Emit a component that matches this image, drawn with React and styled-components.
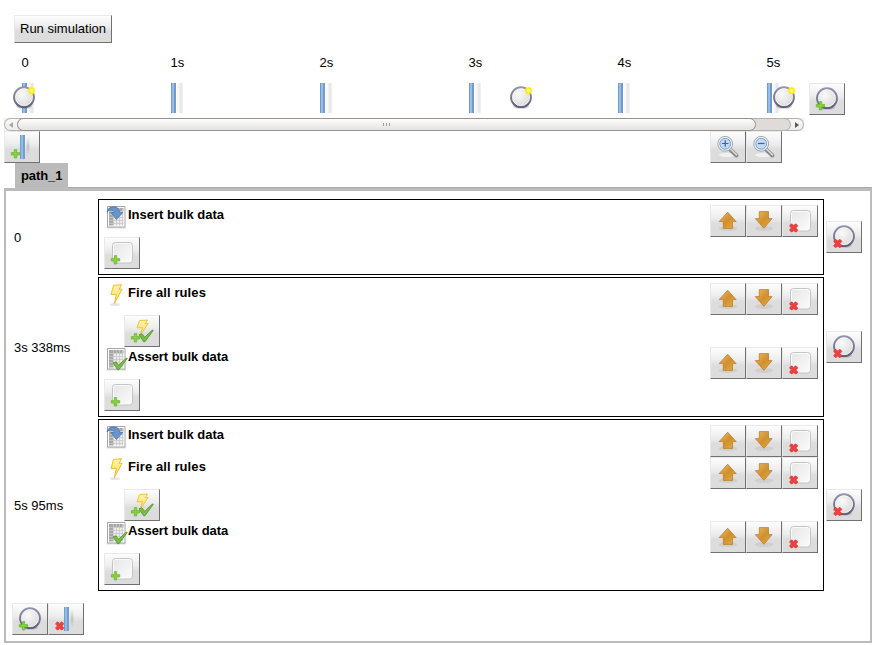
import React from "react";
import styled, { createGlobalStyle } from "styled-components";

const GlobalStyle = createGlobalStyle`
  body {
    margin: 0;
    background: #fff;
    color: #000;
    font: 13px/15px "Liberation Sans", Arial, sans-serif;
  }
  svg { display: block; flex: none; }
`;

const Page = styled.main`
  box-sizing: border-box;
  width: 874px;
  height: 645px;
  padding: 15px 2px 2px 4px;
  display: flex;
  flex-direction: column;
`;

const Button = styled.button`
  box-sizing: border-box;
  flex: none;
  display: flex;
  align-items: center;
  justify-content: center;
  width: ${(p) => p.$width || 36}px;
  height: ${(p) => p.$height || 32}px;
  margin: 0;
  padding: ${(p) => (p.$label ? "0 0 1px" : "0")};
  border: 1px solid #e9e9e9;
  border-right-color: #707070;
  border-bottom-color: #707070;
  background: linear-gradient(#fdfdfd 0%, #ededed 40%, #dddddd 58%, #dcdcdc 100%);
  font: inherit;
  color: inherit;
`;

const RunBar = styled.div`
  height: 28px;
  padding-left: 10px;
  margin-bottom: 12px;
`;

const TimelineRow = styled.div`
  display: flex;
  height: 63px;
`;

const Timeline = styled.div`
  position: relative;
  display: flex;
  width: 800px;
  height: 58px;
  margin-right: 5px;
  padding-left: 18px;
  box-sizing: border-box;
  overflow: hidden;
`;

const Tick = styled.div`
  flex: 0 0 149px;
  & > span {
    display: block;
    height: 28px;
    margin-left: -0.5px;
  }
`;

const Marker = styled.div`
  position: absolute;
  top: 31px;
  left: ${(p) => p.$left}px;
`;

const AddStepSlot = styled.div`
  padding-top: 28px;
`;

const ScrollBar = styled.div`
  box-sizing: border-box;
  display: flex;
  width: 800px;
  height: 13px;
  background: #f0efed;
`;

const ScrollArrow = styled.div`
  box-sizing: border-box;
  display: flex;
  align-items: center;
  justify-content: ${(p) => (p.$end ? "flex-end" : "center")};
  width: ${(p) => (p.$end ? 20 : 20)}px;
  height: 13px;
  margin-left: ${(p) => (p.$end ? -7 : 0)}px;
  margin-right: ${(p) => (p.$end ? 0 : -7)}px;
  padding-right: ${(p) => (p.$end ? 4 : 7)}px;
  border: 1px solid #b4b0ab;
  border-width: ${(p) => (p.$end ? "1px 1px 1px 0" : "1px 0 1px 1px")};
  border-radius: ${(p) => (p.$end ? "0 7px 7px 0" : "7px 0 0 7px")};
  background: linear-gradient(#f9f8f7, #eeedeb);
`;

const ScrollTrack = styled.div`
  box-sizing: border-box;
  position: relative;
  z-index: 1;
  width: 774px;
  height: 13px;
  border: 1px solid #b4b0ab;
  border-left: 0;
  border-radius: 7px;
  background: #dedbd8;
`;

const ScrollThumb = styled.div`
  box-sizing: border-box;
  display: flex;
  align-items: center;
  justify-content: center;
  gap: 2px;
  width: 739px;
  height: 13px;
  margin-top: -1px;
  border: 1px solid #96918c;
  border-radius: 7px;
  background: linear-gradient(#fdfdfc, #f0efed 50%, #e5e3e0);
  & > i {
    width: 1px;
    height: 3px;
    background: #a09c98;
  }
`;

const TimelineTools = styled.div`
  display: flex;
  height: 32px;
  & > :first-child { margin-right: 670px; }
`;

const TabBar = styled.div`
  display: flex;
  width: 868px;
  height: 25px;
  padding-left: 11px;
  box-sizing: border-box;
`;

const Tab = styled.div`
  box-sizing: border-box;
  width: 53px;
  padding: 5px 0 0 6px;
  background: #bbb;
  font-weight: bold;
  letter-spacing: -0.1px;
`;

const TabRule = styled.div`
  flex: 1;
  border-bottom: 1px solid #aaaaa4;
`;

const Panel = styled.section`
  box-sizing: border-box;
  width: 868px;
  height: 455px;
  padding: 8px 8px 7px 6px;
  border: 2px solid #bbb;
  border-top-width: 3px;
  display: flex;
  flex-direction: column;
  gap: 2px;
`;

const StepRow = styled.div`
  display: grid;
  grid-template-columns: 86px 726px 36px;
  align-items: center;
  & > :last-child { margin-left: 2px; }
`;

const Time = styled.span`
  padding-left: 2px;
`;

const Operations = styled.div`
  box-sizing: border-box;
  padding: 5px;
  border: 1px solid #000;
`;

const Operation = styled.div`
  display: flex;
  height: 32px;
`;

const OperationName = styled.strong`
  flex: 1;
  padding-top: 2px;
  letter-spacing: ${(p) => p.$tracking}px;
`;

const Toolbar = styled.div`
  display: flex;
  padding-left: ${(p) => (p.$indent ? 20 : 0)}px;
`;

const Footer = styled.footer`
  display: flex;
  margin-top: 10px;
`;

const Plus = ({ x = 1, y = 14.2 }) => (
  <path
    transform={`translate(${x} ${y})`}
    d="M3.3 .4h2.4v3h3v2.400h-3v3H3.3v-3h-3V3.400h3z"
    fill="#86d13c"
    stroke="#66b52b"
    strokeWidth=".7"
  />
);

const Cross = ({ x = 1.2, y = 14.4 }) => (
  <path
    transform={`translate(${x} ${y})`}
    d="M.5 2 2 .5h1L4.500 2 6 .5h1L8.500 2v.8L6.800 4.500l1.700 1.700V7L7 8.500H6L4.500 7 3 8.500H2L.5 7v-.8l1.700-1.700L.5 2.800z"
    fill="#ed4040"
    stroke="#d92c30"
    strokeWidth=".5"
  />
);

function StepIcon({ badge }) {
  return (
    <svg width="24" height="24" viewBox="0 0 24 24">
      <defs>
        <radialGradient id="orb" cx=".4" cy=".35" r=".7">
          <stop offset="0" stopColor="#fafafa" />
          <stop offset="1" stopColor="#d8d8d6" />
        </radialGradient>
        <linearGradient id="ring" x2="0" y2="1">
          <stop offset="0" stopColor="#9493ae" />
          <stop offset="1" stopColor="#625d7c" />
        </linearGradient>
      </defs>
      <ellipse cx="12" cy="20.5" rx="8" ry="2.3" fill="#777" opacity=".28" />
      <circle cx="12" cy="11.2" r="9.9" fill="url(#orb)" stroke="url(#ring)" strokeWidth="2" />
      <circle cx="12" cy="11.2" r="8.5" fill="none" stroke="#fff" strokeWidth=".8" opacity=".8" />
      {badge === "add" && <Plus />}
      {badge === "remove" && <Cross y={14} />}
      {badge === "dot" && (
        <>
          <circle cx="19.5" cy="4.6" r="4.1" fill="#fff43c" opacity=".35" />
          <circle cx="19.5" cy="4.6" r="2.5" fill="#fff9a0" stroke="#ffec17" strokeWidth="1.7" />
        </>
      )}
    </svg>
  );
}

function BarIcon({ badge }) {
  return (
    <svg width="24" height="24" viewBox="0 0 24 24">
      <defs>
        <radialGradient id="barShadow">
          <stop offset="0" stopColor="#aaa" stopOpacity=".75" />
          <stop offset="1" stopColor="#ccc" stopOpacity="0" />
        </radialGradient>
      </defs>
      <ellipse cx="18" cy="12" rx="2.5" ry="11" fill="url(#barShadow)" />
      <path d="M10 0h5v24h-5z" fill="#709fd3" />
      <path d="M11 0h2v24h-2z" fill="#96b9e0" />
      {badge === "add" ? <Plus /> : <Cross />}
    </svg>
  );
}

const TickBar = () => (
  <svg width="12" height="30" viewBox="0 0 12 30">
    <path d="M0 0h5v30H0z" fill="#6f9bd0" />
    <path d="M1 0h2v30H1z" fill="#9abce2" />
    <path d="M6 0h2v30H6z" fill="#f8f8f8" />
    <path d="M8 0h4v30H8z" fill="#f0f0f0" />
    <path d="M9 0h2v30H9z" fill="#e8e8e8" />
  </svg>
);

function BoxIcon({ badge }) {
  return (
    <svg width="24" height="24" viewBox="0 0 24 24">
      <defs>
        <linearGradient id="boxFill" x2="1" y2="1">
          <stop offset="0" stopColor="#e7e7e7" />
          <stop offset="1" stopColor="#fafafa" />
        </linearGradient>
      </defs>
      <rect x="2.5" y="1.5" width="20" height="20.5" rx="3" fill="#fafafa" stroke="#c4c4c4" />
      <rect x="4" y="3" width="17" height="17.5" rx="1.5" fill="url(#boxFill)" />
      {badge === "add" ? <Plus /> : <Cross />}
    </svg>
  );
}

function ArrowIcon({ down }) {
  return (
    <svg width="24" height="24" viewBox="0 0 24 24">
      <defs>
        <linearGradient id="amber" x2="1" y2="1">
          <stop offset="0" stopColor="#edbd6c" />
          <stop offset=".5" stopColor="#d0902c" />
          <stop offset="1" stopColor="#e9ad45" />
        </linearGradient>
      </defs>
      <ellipse cx="12" cy="19.5" rx="9" ry="2.5" fill="#888" opacity=".16" />
      <path
        d={
          down
            ? "M7.300 2.600h9.200v7h3.600L11.900 19.300 3.300 9.600h4z"
            : "M11.700 3.200l8.400 9.400h-3.600v6.800H7.300v-6.800H3.200z"
        }
        fill="url(#amber)"
        stroke="#b98030"
        strokeWidth=".8"
        strokeLinejoin="round"
      />
    </svg>
  );
}

const Check = () => (
  <path
    d="M9 15.800l3-1 2.700 3.400L22.300 11l1 .4-8.300 11.300h-1.500z"
    fill="#78bd45"
    stroke="#468e22"
    strokeWidth=".7"
    strokeLinejoin="round"
  />
);

function SheetIcon({ kind }) {
  return (
    <svg width="24" height="24" viewBox="0 0 24 24">
      <path d="M2.500 22.800h19.500" stroke="#aaa" strokeWidth="1" opacity=".6" />
      <path d="M3.500 1.500h17.500v20.500h-17.500z" fill="#fff" stroke="#a6a6a6" />
      <path d="M5 3h14.500v3H5zM5 6h4v14.500H5z" fill="#a8a8a8" />
      <path d="M9 6h10.500v14.500H9z" fill="#ececec" />
      <path
        d="M5 6.500h14.500M5 9.500h14.500M5 12.500h14.500M5 15.500h14.500M5 18.500h14.500M9.500 3v17.500M12.500 3v17.500M15.500 3v17.500M18.500 3v17.500"
        stroke="#c8c8c8"
        strokeWidth=".8"
      />
      {kind === "insert" ? (
        <path
          d="M3 7C3.500 .5 15.300-.5 15.800 7.500h3L12.400 14.500 7 7.500h3.400C9.800 4.300 5.500 4 3 7z"
          fill="#6894cc"
          stroke="#4a74ac"
          strokeWidth=".8"
          strokeLinejoin="round"
        />
      ) : (
        <Check />
      )}
    </svg>
  );
}

function FireIcon({ expect }) {
  return (
    <svg width="24" height="24" viewBox="0 0 24 24">
      <defs>
        <linearGradient id="bolt" x2="0" y2="1">
          <stop offset="0" stopColor="#fff3b0" />
          <stop offset="1" stopColor="#ffe04f" />
        </linearGradient>
      </defs>
      {!expect && <ellipse cx="11" cy="21.500" rx="5" ry="1.500" fill="#888" opacity=".22" />}
      <path
        transform={expect ? "translate(0 -.3) scale(1 .8)" : undefined}
        d="M9.500 2.400l8-.7-2.400 4.600 3-.2L10.400 20.500l2-9.300-5.400.4z"
        fill="url(#bolt)"
        stroke="#efbd30"
        strokeWidth="1"
        strokeLinejoin="round"
      />
      {expect && <Plus />}
      {expect && <Check />}
    </svg>
  );
}

function ZoomIcon({ out }) {
  return (
    <svg width="24" height="24" viewBox="0 0 24 24">
      <ellipse cx="11" cy="20" rx="8" ry="2" fill="#fff" opacity=".6" />
      <path d="M13.500 14l7 6.500" stroke="#858585" strokeWidth="4" strokeLinecap="round" />
      <path d="M14 13.700l6.600 6.200" stroke="#d6d6d6" strokeWidth="1.800" strokeLinecap="round" />
      <circle cx="9.200" cy="8.800" r="7.400" fill="#b9d3f1" stroke="#a5aaa9" strokeWidth="1" />
      <circle cx="9.200" cy="8.800" r="6.200" fill="#c1daf5" stroke="#f5f5f3" strokeWidth="1.200" />
      <circle cx="9.200" cy="8.800" r="5.400" fill="none" stroke="#7299cb" strokeWidth=".9" />
      <path d={out ? "M6 8.500h6.500" : "M6 8.500h6.500M9.250 5.300v6.500"} stroke="#446488" strokeWidth="1.200" />
    </svg>
  );
}

const operationTypes = {
  insert: { label: "Insert bulk data", tracking: 0 },
  fire: { label: "Fire all rules", tracking: 0.1 },
  assert: { label: "Assert bulk data", tracking: -0.06 },
};

const steps = [
  { time: "0", operations: ["insert"] },
  { time: "3s 338ms", operations: ["fire", "assert"] },
  { time: "5s 95ms", operations: ["insert", "fire", "assert"] },
];

function OperationItem({ kind }) {
  const { label, tracking } = operationTypes[kind];
  return (
    <>
      <Operation>
        {kind === "fire" ? <FireIcon /> : <SheetIcon kind={kind} />}
        <OperationName $tracking={tracking}>{label}</OperationName>
        <Button aria-label="Move up"><ArrowIcon /></Button>
        <Button aria-label="Move down"><ArrowIcon down /></Button>
        <Button aria-label="Remove operation"><BoxIcon badge="remove" /></Button>
      </Operation>
      {kind === "fire" && (
        <Toolbar $indent>
          <Button aria-label="Add expectation"><FireIcon expect /></Button>
        </Toolbar>
      )}
    </>
  );
}

export default function App() {
  return (
    <Page>
      <GlobalStyle />
      <RunBar>
        <Button $width={98} $height={28} $label>Run simulation</Button>
      </RunBar>
      <TimelineRow>
        <Timeline>
          {["0", "1s", "2s", "3s", "4s", "5s"].map((label) => (
            <Tick key={label}>
              <span>{label}</span>
              <TickBar />
            </Tick>
          ))}
          {[8, 505, 768].map((left) => (
            <Marker key={left} $left={left}><StepIcon badge="dot" /></Marker>
          ))}
        </Timeline>
        <AddStepSlot>
          <Button aria-label="Add step"><StepIcon badge="add" /></Button>
        </AddStepSlot>
      </TimelineRow>
      <ScrollBar>
        <ScrollArrow>
          <svg width="4" height="6" viewBox="0 0 4 6"><path d="M4 0v6L0 3z" fill="#aaa7a4" /></svg>
        </ScrollArrow>
        <ScrollTrack>
          <ScrollThumb><i /><i /><i /></ScrollThumb>
        </ScrollTrack>
        <ScrollArrow $end>
          <svg width="4" height="6" viewBox="0 0 4 6"><path d="M0 0v6l4-3z" fill="#5c5855" /></svg>
        </ScrollArrow>
      </ScrollBar>
      <TimelineTools>
        <Button aria-label="Add path"><BarIcon badge="add" /></Button>
        <Button aria-label="Zoom in"><ZoomIcon /></Button>
        <Button aria-label="Zoom out"><ZoomIcon out /></Button>
      </TimelineTools>
      <TabBar>
        <Tab>path_1</Tab>
        <TabRule />
      </TabBar>
      <Panel>
        {steps.map((step) => (
          <StepRow key={step.time}>
            <Time>{step.time}</Time>
            <Operations>
              {step.operations.map((kind) => <OperationItem key={kind} kind={kind} />)}
              <Toolbar>
                <Button aria-label="Add operation"><BoxIcon badge="add" /></Button>
              </Toolbar>
            </Operations>
            <Button aria-label="Remove step"><StepIcon badge="remove" /></Button>
          </StepRow>
        ))}
        <Footer>
          <Button aria-label="Add step"><StepIcon badge="add" /></Button>
          <Button aria-label="Remove path"><BarIcon badge="remove" /></Button>
        </Footer>
      </Panel>
    </Page>
  );
}
